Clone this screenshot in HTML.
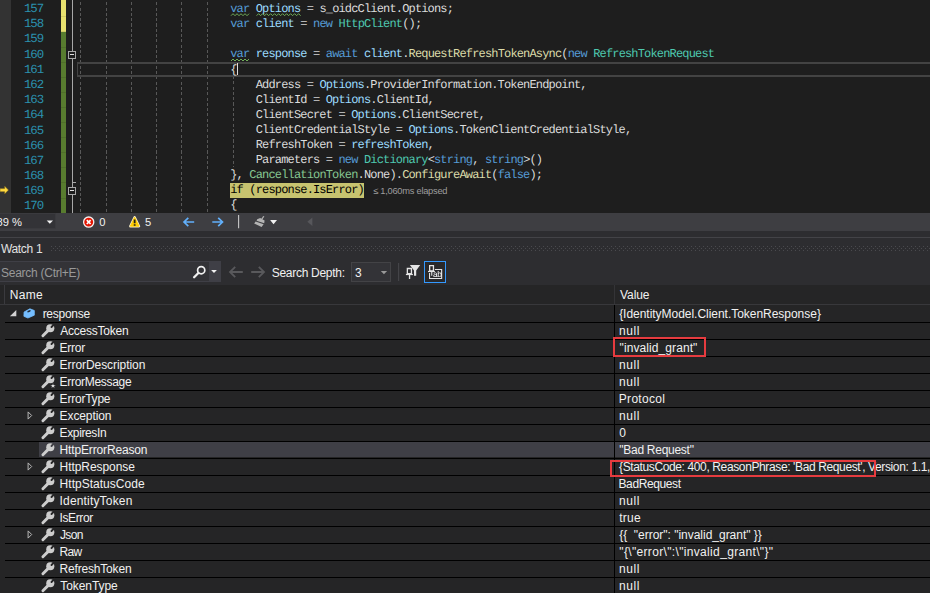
<!DOCTYPE html>
<html lang="en">
<head>
<meta charset="utf-8">
<title>Watch 1</title>
<style>
html,body{margin:0;padding:0;}
body{width:930px;height:593px;overflow:hidden;position:relative;background:#2d2d30;font-family:"Liberation Sans",sans-serif;font-size:12px;color:#f1f1f1;}
div,svg{position:absolute;box-sizing:border-box;}
svg{overflow:visible;}
.ed{left:0;top:0;width:930px;height:213px;background:#1e1e1e;overflow:hidden;}
.gut{left:0;top:0;width:11px;height:213px;background:#333333;}
.ln,.cl{font-family:"Liberation Mono",monospace;font-size:12.0px;line-height:15.1px;height:15.1px;white-space:pre;letter-spacing:-0.836px;text-rendering:geometricPrecision;}
.ln{left:0;width:43.0px;text-align:right;color:#2b91af;font-size:12.4px;letter-spacing:-1.076px;}
.cl{color:#dcdcdc;}
.k{color:#569cd6}.v{color:#9cdcfe}.t{color:#4ec9b0}.m{color:#dcdcaa}.s{color:#86c691}.o{color:#b4b4b4}
.h{color:#000;}
.ig{top:-2.9px;width:1.2px;height:220px;background:repeating-linear-gradient(to bottom,#585858 0,#585858 3.1px,transparent 3.1px,transparent 5.29px);}
.tx{white-space:pre;}
.rl{left:5px;width:925px;height:1px;background:#000;}
</style>
</head>
<body>

<div class="ed">
<div class="gut"></div>
<div style="left:61.3px;top:0;width:4.8px;height:32px;background:#e8e16f"></div>
<div style="left:61.3px;top:32px;width:4.8px;height:181px;background:#587c2f"></div>
<div style="left:61.3px;top:16.3px;width:4.8px;height:1px;background:rgba(0,0,0,0.09)"></div>
<div style="left:61.3px;top:31.4px;width:4.8px;height:1px;background:rgba(0,0,0,0.09)"></div>
<div style="left:61.3px;top:46.5px;width:4.8px;height:1px;background:rgba(0,0,0,0.09)"></div>
<div style="left:61.3px;top:61.6px;width:4.8px;height:1px;background:rgba(0,0,0,0.09)"></div>
<div style="left:61.3px;top:76.7px;width:4.8px;height:1px;background:rgba(0,0,0,0.09)"></div>
<div style="left:61.3px;top:91.8px;width:4.8px;height:1px;background:rgba(0,0,0,0.09)"></div>
<div style="left:61.3px;top:106.9px;width:4.8px;height:1px;background:rgba(0,0,0,0.09)"></div>
<div style="left:61.3px;top:122.0px;width:4.8px;height:1px;background:rgba(0,0,0,0.09)"></div>
<div style="left:61.3px;top:137.1px;width:4.8px;height:1px;background:rgba(0,0,0,0.09)"></div>
<div style="left:61.3px;top:152.2px;width:4.8px;height:1px;background:rgba(0,0,0,0.09)"></div>
<div style="left:61.3px;top:167.3px;width:4.8px;height:1px;background:rgba(0,0,0,0.09)"></div>
<div style="left:61.3px;top:182.4px;width:4.8px;height:1px;background:rgba(0,0,0,0.09)"></div>
<div style="left:61.3px;top:197.5px;width:4.8px;height:1px;background:rgba(0,0,0,0.09)"></div>
<div style="left:61.3px;top:212.6px;width:4.8px;height:1px;background:rgba(0,0,0,0.09)"></div>
<div style="left:72px;top:0;width:1.1px;height:213px;background:#a8a8a8"></div>
<div style="left:73px;top:182px;width:3.3px;height:1px;background:#a8a8a8"></div>
<div style="left:68px;top:51px;width:8.2px;height:8.2px;border:1px solid #a8a8a8;background:#1e1e1e"></div>
<div style="left:70px;top:53.8px;width:4.2px;height:1.2px;background:#e0e0e0"></div>
<div style="left:68px;top:187px;width:8.2px;height:8.2px;border:1px solid #a8a8a8;background:#1e1e1e"></div>
<div style="left:70px;top:189.8px;width:4.2px;height:1.2px;background:#e0e0e0"></div>
<div class="ig" style="left:79.9px"></div>
<div class="ig" style="left:105.9px"></div>
<div class="ig" style="left:130.9px"></div>
<div class="ig" style="left:155.8px"></div>
<div class="ig" style="left:180.8px"></div>
<div class="ig" style="left:206.9px"></div>
<div class="ig" style="left:233.2px;top:76.45px;height:90.3px"></div>
<div style="left:77px;top:62px;width:860px;height:14.8px;border:2px solid #434343;border-left-width:1px;"></div>
<div style="left:230.2px;top:182.7px;width:133.6px;height:15.2px;background:#c7c36f"></div>
<div style="left:237px;top:63px;width:1px;height:12px;background:#dcdcdc"></div>
<div class="ln" style="top:2.14px">157</div>
<div class="cl" style="left:230.26px;top:2.15px"><span class="k">var</span> <span class="v">Options</span><span class="o"> = </span>s_oidcClient.Options;</div>
<div class="ln" style="top:17.31px">158</div>
<div class="cl" style="left:230.26px;top:17.25px"><span class="k">var</span> <span class="v">client</span><span class="o"> = </span><span class="k">new</span> <span class="t">HttpClient</span>();</div>
<div class="ln" style="top:32.48px">159</div>
<div class="ln" style="top:47.65px">160</div>
<div class="cl" style="left:230.26px;top:47.45px"><span class="k">var</span> <span class="v">response</span><span class="o"> = </span><span class="k">await</span> <span class="v">client</span>.<span class="m">RequestRefreshTokenAsync</span>(<span class="k">new</span> <span class="t">RefreshTokenRequest</span></div>
<div class="ln" style="top:62.82px">161</div>
<div class="cl" style="left:230.26px;top:62.55px">{</div>
<div class="ln" style="top:77.99px">162</div>
<div class="cl" style="left:255.72px;top:77.65px">Address<span class="o"> = </span><span class="v">Options</span>.ProviderInformation.TokenEndpoint,</div>
<div class="ln" style="top:93.16px">163</div>
<div class="cl" style="left:255.72px;top:92.75px">ClientId<span class="o"> = </span><span class="v">Options</span>.ClientId,</div>
<div class="ln" style="top:108.33px">164</div>
<div class="cl" style="left:255.72px;top:107.85px">ClientSecret<span class="o"> = </span><span class="v">Options</span>.ClientSecret,</div>
<div class="ln" style="top:123.50px">165</div>
<div class="cl" style="left:255.72px;top:122.95px">ClientCredentialStyle<span class="o"> = </span><span class="v">Options</span>.TokenClientCredentialStyle,</div>
<div class="ln" style="top:138.67px">166</div>
<div class="cl" style="left:255.72px;top:138.05px">RefreshToken<span class="o"> = </span><span class="v">refreshToken</span>,</div>
<div class="ln" style="top:153.84px">167</div>
<div class="cl" style="left:255.72px;top:153.15px">Parameters<span class="o"> = </span><span class="k">new</span> <span class="t">Dictionary</span>&lt;<span class="k">string</span>, <span class="k">string</span>&gt;()</div>
<div class="ln" style="top:169.01px">168</div>
<div class="cl" style="left:230.26px;top:168.25px">}, <span class="s">CancellationToken</span>.None).<span class="m">ConfigureAwait</span>(<span class="k">false</span>);</div>
<div class="ln" style="top:184.18px">169</div>
<div class="cl" style="left:230.26px;top:183.35px"><span class="h">if (response.IsError)</span></div>
<div class="ln" style="top:199.35px">170</div>
<div class="cl" style="left:230.26px;top:198.45px">{</div>
<svg style="left:0;top:0" width="930" height="213"><path d="M231.0 15.7 L233.0 13.7 L235.0 15.7 L237.0 13.7 L239.0 15.7 L241.0 13.7 L243.0 15.7 L245.0 13.7 L247.0 15.7 L249.0 13.7" fill="none" stroke="#74b45c" stroke-width="0.95"/><path d="M256.6 15.7 L258.6 13.7 L260.6 15.7 L262.6 13.7 L264.6 15.7 L266.6 13.7 L268.6 15.7 L270.6 13.7 L272.6 15.7 L274.6 13.7 L276.6 15.7 L278.6 13.7 L280.6 15.7 L282.6 13.7 L284.6 15.7 L286.6 13.7 L288.6 15.7 L290.6 13.7 L292.6 15.7 L294.6 13.7 L296.6 15.7 L298.6 13.7 L300.6 15.7" fill="none" stroke="#74b45c" stroke-width="0.95"/><path d="M231.0 61.0 L233.0 59.0 L235.0 61.0 L237.0 59.0 L239.0 61.0 L241.0 59.0 L243.0 61.0 L245.0 59.0 L247.0 61.0 L249.0 59.0" fill="none" stroke="#74b45c" stroke-width="0.95"/></svg>
<div class="tx" id="elapsed" style="left:373.15px;top:184.20px;font-size:9.3px;line-height:15px;color:#9d9d9d;letter-spacing:-0.259px;">≤ 1,060ms elapsed</div>
<svg style="left:0;top:185px" width="10" height="10" viewBox="0 0 10 10"><path d="M0 3.6 H4.6 V1.1 L8.5 5.1 L4.6 9.1 V6.7 H0 Z" fill="#ffd83d" stroke="#6b5a1c" stroke-width="0.5"/></svg>
</div>
<div style="left:0;top:213px;width:930px;height:18px;background:#3e3e42"></div>
<div style="left:-1px;top:213px;width:56.5px;height:16px;background:#333337;border:1px solid #3a3a3e"></div>
<div class="tx" id="zoom" style="left:-3.55px;top:213.90px;font-size:11.2px;line-height:16px;color:#f1f1f1;letter-spacing:0.000px;">89 %</div>
<div class="tx" id="err0" style="left:99.15px;top:214.00px;font-size:11.2px;line-height:16px;color:#f1f1f1;letter-spacing:0.000px;">0</div>
<div class="tx" id="warn5" style="left:144.95px;top:214.00px;font-size:11.2px;line-height:16px;color:#f1f1f1;letter-spacing:0.000px;">5</div>
<svg style="left:0;top:213px" width="930" height="18" viewBox="0 213 930 18"><path d="M46.7 220.5 H53 L49.85 223.8 Z" fill="#f1f1f1"/><circle cx="88.7" cy="222.1" r="5.1" fill="#e51400" stroke="#f4f0f0" stroke-width="1.3"/><path d="M86.8 220.2 L90.6 224 M90.6 220.2 L86.8 224" stroke="#fff" stroke-width="1.7" fill="none"/><path d="M134.65 217.3 L139 226.2 H130.3 Z" fill="#ffcc00" stroke="#f8f0d0" stroke-width="2.4" stroke-linejoin="round"/><path d="M134.65 217.3 L139 226.2 H130.3 Z" fill="#ffcc00" stroke="#ffcc00" stroke-width="0.9" stroke-linejoin="round"/><path d="M134.65 219.4 V223.2 M134.65 224.2 V225.8" stroke="#1e1e1e" stroke-width="1.8" fill="none"/><path d="M194.2 222 H184 M188.3 217.8 L184 222 L188.3 226.2" stroke="#62b0fb" stroke-width="1.7" fill="none"/><path d="M212.3 222 H222.5 M218.2 217.8 L222.5 222 L218.2 226.2" stroke="#62b0fb" stroke-width="1.7" fill="none"/><path d="M238.6 215 V228.3" stroke="#c8c8c8" stroke-width="1.1"/><g fill="#b4b4b4" stroke="none"><path d="M263.2 215.9 L264.4 216.6 L261.9 220 L260.9 219.4 Z"/><path d="M257.2 219.3 L260.2 218 L264.6 220.6 L264.2 223.2 L256.6 220.8 Z"/><path d="M255.6 221.6 L263.6 224.3 L261.6 227 L254.2 223.6 Z"/></g><path d="M270.1 220.1 H277 L273.55 224.2 Z" fill="#f1f1f1"/><path d="M312.4 217.6 V226 L307.3 221.8 Z" fill="#57575b"/></svg>
<div style="left:0;top:237px;width:930px;height:1px;background:#434347"></div>
<div class="tx" id="watch1" style="left:0.90px;top:241.20px;font-size:12px;line-height:17px;color:#e2e2e2;letter-spacing:-0.317px;">Watch 1</div>
<div style="left:50.5px;top:246px;width:880px;height:5px;background-image:radial-gradient(circle at 0.5px 0.5px,#4a4a4e 0.55px,transparent 0.75px),radial-gradient(circle at 2.5px 2.5px,#4a4a4e 0.55px,transparent 0.75px);background-size:4px 4px;"></div>
<div style="left:-1px;top:261px;width:222px;height:21px;background:#333337;border:1px solid #3f3f46"></div>
<div style="left:209px;top:261px;width:12px;height:21px;background:#3f3f46"></div>
<div class="tx" id="search" style="left:1.00px;top:263.70px;font-size:12px;line-height:18px;color:#999999;letter-spacing:-0.264px;">Search (Ctrl+E)</div>
<div class="tx" id="sdepth" style="left:271.70px;top:264.10px;font-size:12px;line-height:18px;color:#f1f1f1;letter-spacing:-0.279px;">Search Depth:</div>
<div style="left:351px;top:262px;width:40px;height:20px;background:#333337;border:1px solid #434346"></div>
<div class="tx" id="three" style="left:355.05px;top:264.10px;font-size:12px;line-height:18px;color:#f1f1f1;letter-spacing:0.000px;">3</div>
<div style="left:424px;top:261px;width:22px;height:22px;background:#29292b;border:1px solid #3399ff"></div>
<svg style="left:0;top:257px" width="930" height="28" viewBox="0 257 930 28"><circle cx="201.2" cy="270.2" r="3.6" fill="none" stroke="#f1f1f1" stroke-width="1.7"/><path d="M198.4 273 L194.1 277.3" stroke="#f1f1f1" stroke-width="2.3" stroke-linecap="round"/><path d="M211.1 270.1 H216.9 L214 273 Z" fill="#f1f1f1"/><path d="M242.8 272 H230 M235.2 266.8 L230 272 L235.2 277.2" stroke="#59595c" stroke-width="1.8" fill="none"/><path d="M251.2 272 H264 M258.8 266.8 L264 272 L258.8 277.2" stroke="#59595c" stroke-width="1.8" fill="none"/><path d="M380.8 271 H387.1 L383.95 274.2 Z" fill="#999"/><path d="M398.6 263 V281" stroke="#46464a" stroke-width="1.1"/><g fill="none" stroke="#e4e4e4"><path d="M407.35 268.5 H411.45 V273.6 H407.35 Z" stroke-width="1.3"/><path d="M405.9 274.5 H412.9" stroke-width="1.2"/><path d="M409.55 275 V279" stroke-width="1.3"/></g><path d="M409.9 265 H420.2 L416.2 270.6 V275.7 H414 V270.6 Z" fill="#e4e4e4"/><g fill="none" stroke="#e4e4e4"><path d="M429.65 265.65 H433.45 V270.8 H429.65 Z" stroke-width="1.3"/><path d="M428 271.5 H434.9" stroke-width="1.2"/><path d="M431.75 272 V275.7" stroke-width="1.1"/><path d="M429.55 273 V278.45 H441.65 V269.5 H434.9" stroke-width="1.1"/></g></svg>
<div class="tx" style="left:432.7px;top:270.3px;font-size:8.3px;line-height:8px;color:#ffffff;letter-spacing:-0.4px;text-rendering:geometricPrecision;will-change:transform;opacity:0.99">ab</div>
<div style="left:0;top:285px;width:930px;height:308px;background:#252526"></div>
<div style="left:4px;top:285px;width:1px;height:20px;background:#3a3a3e"></div>
<div style="left:0;top:304px;width:930px;height:1px;background:#38383b"></div>
<div style="left:614px;top:285px;width:1px;height:19px;background:#343437"></div>
<div class="tx" id="hname" style="left:9.65px;top:286.50px;font-size:12px;line-height:16px;color:#f1f1f1;letter-spacing:0.333px;">Name</div>
<div class="tx" id="hvalue" style="left:620.10px;top:286.50px;font-size:12px;line-height:16px;color:#f1f1f1;letter-spacing:-0.088px;">Value</div>
<svg style="left:0;top:305px" width="40" height="17" viewBox="0 305 40 17"><path d="M16.3 309.9 V316.3 H9.9 Z" fill="#d4d4d4"/><path d="M24.1 312 L29.9 308.8 L34.3 310.5 L34.3 315.2 L27.9 318 L23.9 316.3 Z" fill="#75beff" stroke="#75beff" stroke-width="0.8" stroke-linejoin="round"/><ellipse cx="29" cy="311.3" rx="1.9" ry="0.85" transform="rotate(-25 29 311.3)" fill="#1f2a38"/></svg>
<div class="tx" id="n0" style="left:42.65px;top:306.20px;font-size:12px;line-height:16px;color:#f1f1f1;letter-spacing:-0.264px;">response</div>
<div class="tx" id="v0" style="left:619.15px;top:306.20px;font-size:12px;line-height:16px;color:#f1f1f1;letter-spacing:-0.030px;">{IdentityModel.Client.TokenResponse}</div>
<div class="rl" style="top:322px"></div>
<svg style="left:40.5px;top:324.2px" width="14" height="14" viewBox="0 0 14 14"><path d="M1.9 11.7 L8 5.6" stroke="#cdcdcd" stroke-width="2.9" stroke-linecap="round" fill="none"/><circle cx="9.3" cy="4.2" r="4.05" fill="#cdcdcd"/><path d="M10.5 3.0 L13.8 -0.3" stroke="#252526" stroke-width="1.9" stroke-linecap="round" fill="none"/></svg>
<div class="tx" id="n1" style="left:60.20px;top:323.00px;font-size:12px;line-height:16px;color:#f1f1f1;letter-spacing:-0.220px;">AccessToken</div>
<div class="tx" id="v1" style="left:619.05px;top:323.00px;font-size:12px;line-height:16px;color:#f1f1f1;letter-spacing:0.550px;">null</div>
<div class="rl" style="top:339px"></div>
<svg style="left:40.5px;top:341.2px" width="14" height="14" viewBox="0 0 14 14"><path d="M1.9 11.7 L8 5.6" stroke="#cdcdcd" stroke-width="2.9" stroke-linecap="round" fill="none"/><circle cx="9.3" cy="4.2" r="4.05" fill="#cdcdcd"/><path d="M10.5 3.0 L13.8 -0.3" stroke="#252526" stroke-width="1.9" stroke-linecap="round" fill="none"/></svg>
<div class="tx" id="n2" style="left:59.60px;top:340.00px;font-size:12px;line-height:16px;color:#f1f1f1;letter-spacing:-0.275px;">Error</div>
<div class="tx" id="v2" style="left:619.60px;top:340.00px;font-size:12px;line-height:16px;color:#f1f1f1;letter-spacing:0.086px;">&quot;invalid_grant&quot;</div>
<div class="rl" style="top:356px"></div>
<svg style="left:40.5px;top:358.2px" width="14" height="14" viewBox="0 0 14 14"><path d="M1.9 11.7 L8 5.6" stroke="#cdcdcd" stroke-width="2.9" stroke-linecap="round" fill="none"/><circle cx="9.3" cy="4.2" r="4.05" fill="#cdcdcd"/><path d="M10.5 3.0 L13.8 -0.3" stroke="#252526" stroke-width="1.9" stroke-linecap="round" fill="none"/></svg>
<div class="tx" id="n3" style="left:59.60px;top:357.00px;font-size:12px;line-height:16px;color:#f1f1f1;letter-spacing:-0.060px;">ErrorDescription</div>
<div class="tx" id="v3" style="left:619.05px;top:357.00px;font-size:12px;line-height:16px;color:#f1f1f1;letter-spacing:0.550px;">null</div>
<div class="rl" style="top:373px"></div>
<svg style="left:40.5px;top:375.2px" width="14" height="14" viewBox="0 0 14 14"><path d="M1.9 11.7 L8 5.6" stroke="#cdcdcd" stroke-width="2.9" stroke-linecap="round" fill="none"/><circle cx="9.3" cy="4.2" r="4.05" fill="#cdcdcd"/><path d="M10.5 3.0 L13.8 -0.3" stroke="#252526" stroke-width="1.9" stroke-linecap="round" fill="none"/><path d="M12.00 8.00 L12.71 9.93 L14.76 10.00 L13.14 11.27 L13.70 13.25 L12.00 12.10 L10.30 13.25 L10.86 11.27 L9.24 10.00 L11.29 9.93 Z" fill="#ececec" stroke="#252526" stroke-width="0.5"/></svg>
<div class="tx" id="n4" style="left:59.60px;top:374.00px;font-size:12px;line-height:16px;color:#f1f1f1;letter-spacing:-0.309px;">ErrorMessage</div>
<div class="tx" id="v4" style="left:619.05px;top:374.00px;font-size:12px;line-height:16px;color:#f1f1f1;letter-spacing:0.550px;">null</div>
<div class="rl" style="top:390px"></div>
<svg style="left:40.5px;top:392.2px" width="14" height="14" viewBox="0 0 14 14"><path d="M1.9 11.7 L8 5.6" stroke="#cdcdcd" stroke-width="2.9" stroke-linecap="round" fill="none"/><circle cx="9.3" cy="4.2" r="4.05" fill="#cdcdcd"/><path d="M10.5 3.0 L13.8 -0.3" stroke="#252526" stroke-width="1.9" stroke-linecap="round" fill="none"/></svg>
<div class="tx" id="n5" style="left:59.60px;top:391.00px;font-size:12px;line-height:16px;color:#f1f1f1;letter-spacing:-0.219px;">ErrorType</div>
<div class="tx" id="v5" style="left:618.80px;top:391.00px;font-size:12px;line-height:16px;color:#f1f1f1;letter-spacing:0.293px;">Protocol</div>
<div class="rl" style="top:407px"></div>
<svg style="left:27px;top:410.7px" width="6" height="9" viewBox="0 0 6 9"><path d="M1.1 0.9 L4.7 4.5 L1.1 8.1 Z" fill="none" stroke="#b8b8b8" stroke-width="1"/></svg>
<svg style="left:40.5px;top:409.2px" width="14" height="14" viewBox="0 0 14 14"><path d="M1.9 11.7 L8 5.6" stroke="#cdcdcd" stroke-width="2.9" stroke-linecap="round" fill="none"/><circle cx="9.3" cy="4.2" r="4.05" fill="#cdcdcd"/><path d="M10.5 3.0 L13.8 -0.3" stroke="#252526" stroke-width="1.9" stroke-linecap="round" fill="none"/></svg>
<div class="tx" id="n6" style="left:59.60px;top:408.00px;font-size:12px;line-height:16px;color:#f1f1f1;letter-spacing:-0.100px;">Exception</div>
<div class="tx" id="v6" style="left:619.05px;top:408.00px;font-size:12px;line-height:16px;color:#f1f1f1;letter-spacing:0.550px;">null</div>
<div class="rl" style="top:424px"></div>
<svg style="left:40.5px;top:426.2px" width="14" height="14" viewBox="0 0 14 14"><path d="M1.9 11.7 L8 5.6" stroke="#cdcdcd" stroke-width="2.9" stroke-linecap="round" fill="none"/><circle cx="9.3" cy="4.2" r="4.05" fill="#cdcdcd"/><path d="M10.5 3.0 L13.8 -0.3" stroke="#252526" stroke-width="1.9" stroke-linecap="round" fill="none"/></svg>
<div class="tx" id="n7" style="left:59.60px;top:425.00px;font-size:12px;line-height:16px;color:#f1f1f1;letter-spacing:-0.381px;">ExpiresIn</div>
<div class="tx" id="v7" style="left:619.30px;top:425.00px;font-size:12px;line-height:16px;color:#f1f1f1;letter-spacing:0.000px;">0</div>
<div style="left:39px;top:441px;width:891px;height:16px;background:#3f3f46"></div>
<div class="rl" style="top:441px"></div>
<svg style="left:40.5px;top:443.2px" width="14" height="14" viewBox="0 0 14 14"><path d="M1.9 11.7 L8 5.6" stroke="#cdcdcd" stroke-width="2.9" stroke-linecap="round" fill="none"/><circle cx="9.3" cy="4.2" r="4.05" fill="#cdcdcd"/><path d="M10.5 3.0 L13.8 -0.3" stroke="#3f3f46" stroke-width="1.9" stroke-linecap="round" fill="none"/></svg>
<div class="tx" id="n8" style="left:59.60px;top:442.00px;font-size:12px;line-height:16px;color:#f1f1f1;letter-spacing:-0.154px;">HttpErrorReason</div>
<div class="tx" id="v8" style="left:619.30px;top:442.00px;font-size:12px;line-height:16px;color:#f1f1f1;letter-spacing:-0.275px;">&quot;Bad Request&quot;</div>
<div class="rl" style="top:458px"></div>
<svg style="left:27px;top:461.7px" width="6" height="9" viewBox="0 0 6 9"><path d="M1.1 0.9 L4.7 4.5 L1.1 8.1 Z" fill="none" stroke="#b8b8b8" stroke-width="1"/></svg>
<svg style="left:40.5px;top:460.2px" width="14" height="14" viewBox="0 0 14 14"><path d="M1.9 11.7 L8 5.6" stroke="#cdcdcd" stroke-width="2.9" stroke-linecap="round" fill="none"/><circle cx="9.3" cy="4.2" r="4.05" fill="#cdcdcd"/><path d="M10.5 3.0 L13.8 -0.3" stroke="#252526" stroke-width="1.9" stroke-linecap="round" fill="none"/></svg>
<div class="tx" id="n9" style="left:59.60px;top:459.00px;font-size:12px;line-height:16px;color:#f1f1f1;letter-spacing:-0.064px;">HttpResponse</div>
<div class="tx" id="v9" style="left:619.05px;top:459.00px;font-size:12px;line-height:16px;color:#f1f1f1;letter-spacing:-0.377px;">{StatusCode: 400, ReasonPhrase: &#x27;Bad Request&#x27;, Version: 1.1,</div>
<div class="rl" style="top:475px"></div>
<svg style="left:40.5px;top:477.2px" width="14" height="14" viewBox="0 0 14 14"><path d="M1.9 11.7 L8 5.6" stroke="#cdcdcd" stroke-width="2.9" stroke-linecap="round" fill="none"/><circle cx="9.3" cy="4.2" r="4.05" fill="#cdcdcd"/><path d="M10.5 3.0 L13.8 -0.3" stroke="#252526" stroke-width="1.9" stroke-linecap="round" fill="none"/></svg>
<div class="tx" id="n10" style="left:59.60px;top:476.00px;font-size:12px;line-height:16px;color:#f1f1f1;letter-spacing:0.019px;">HttpStatusCode</div>
<div class="tx" id="v10" style="left:618.50px;top:476.00px;font-size:12px;line-height:16px;color:#f1f1f1;letter-spacing:-0.389px;">BadRequest</div>
<div class="rl" style="top:492px"></div>
<svg style="left:40.5px;top:494.2px" width="14" height="14" viewBox="0 0 14 14"><path d="M1.9 11.7 L8 5.6" stroke="#cdcdcd" stroke-width="2.9" stroke-linecap="round" fill="none"/><circle cx="9.3" cy="4.2" r="4.05" fill="#cdcdcd"/><path d="M10.5 3.0 L13.8 -0.3" stroke="#252526" stroke-width="1.9" stroke-linecap="round" fill="none"/></svg>
<div class="tx" id="n11" style="left:59.60px;top:493.00px;font-size:12px;line-height:16px;color:#f1f1f1;letter-spacing:0.167px;">IdentityToken</div>
<div class="tx" id="v11" style="left:619.05px;top:493.00px;font-size:12px;line-height:16px;color:#f1f1f1;letter-spacing:0.550px;">null</div>
<div class="rl" style="top:509px"></div>
<svg style="left:40.5px;top:511.2px" width="14" height="14" viewBox="0 0 14 14"><path d="M1.9 11.7 L8 5.6" stroke="#cdcdcd" stroke-width="2.9" stroke-linecap="round" fill="none"/><circle cx="9.3" cy="4.2" r="4.05" fill="#cdcdcd"/><path d="M10.5 3.0 L13.8 -0.3" stroke="#252526" stroke-width="1.9" stroke-linecap="round" fill="none"/></svg>
<div class="tx" id="n12" style="left:59.60px;top:510.00px;font-size:12px;line-height:16px;color:#f1f1f1;letter-spacing:-0.408px;">IsError</div>
<div class="tx" id="v12" style="left:619.15px;top:510.00px;font-size:12px;line-height:16px;color:#f1f1f1;letter-spacing:0.267px;">true</div>
<div class="rl" style="top:526px"></div>
<svg style="left:27px;top:529.7px" width="6" height="9" viewBox="0 0 6 9"><path d="M1.1 0.9 L4.7 4.5 L1.1 8.1 Z" fill="none" stroke="#b8b8b8" stroke-width="1"/></svg>
<svg style="left:40.5px;top:528.2px" width="14" height="14" viewBox="0 0 14 14"><path d="M1.9 11.7 L8 5.6" stroke="#cdcdcd" stroke-width="2.9" stroke-linecap="round" fill="none"/><circle cx="9.3" cy="4.2" r="4.05" fill="#cdcdcd"/><path d="M10.5 3.0 L13.8 -0.3" stroke="#252526" stroke-width="1.9" stroke-linecap="round" fill="none"/></svg>
<div class="tx" id="n13" style="left:59.95px;top:527.00px;font-size:12px;line-height:16px;color:#f1f1f1;letter-spacing:-0.633px;">Json</div>
<div class="tx" id="v13" style="left:619.15px;top:527.00px;font-size:12px;line-height:16px;color:#f1f1f1;letter-spacing:-0.015px;">{{  &quot;error&quot;: &quot;invalid_grant&quot; }}</div>
<div class="rl" style="top:543px"></div>
<svg style="left:40.5px;top:545.2px" width="14" height="14" viewBox="0 0 14 14"><path d="M1.9 11.7 L8 5.6" stroke="#cdcdcd" stroke-width="2.9" stroke-linecap="round" fill="none"/><circle cx="9.3" cy="4.2" r="4.05" fill="#cdcdcd"/><path d="M10.5 3.0 L13.8 -0.3" stroke="#252526" stroke-width="1.9" stroke-linecap="round" fill="none"/></svg>
<div class="tx" id="n14" style="left:59.60px;top:544.00px;font-size:12px;line-height:16px;color:#f1f1f1;letter-spacing:-0.700px;">Raw</div>
<div class="tx" id="v14" style="left:619.30px;top:544.00px;font-size:12px;line-height:16px;color:#f1f1f1;letter-spacing:0.338px;">&quot;{\&quot;error\&quot;:\&quot;invalid_grant\&quot;}&quot;</div>
<div class="rl" style="top:560px"></div>
<svg style="left:40.5px;top:562.2px" width="14" height="14" viewBox="0 0 14 14"><path d="M1.9 11.7 L8 5.6" stroke="#cdcdcd" stroke-width="2.9" stroke-linecap="round" fill="none"/><circle cx="9.3" cy="4.2" r="4.05" fill="#cdcdcd"/><path d="M10.5 3.0 L13.8 -0.3" stroke="#252526" stroke-width="1.9" stroke-linecap="round" fill="none"/></svg>
<div class="tx" id="n15" style="left:59.60px;top:561.00px;font-size:12px;line-height:16px;color:#f1f1f1;letter-spacing:-0.186px;">RefreshToken</div>
<div class="tx" id="v15" style="left:619.05px;top:561.00px;font-size:12px;line-height:16px;color:#f1f1f1;letter-spacing:0.550px;">null</div>
<div class="rl" style="top:577px"></div>
<svg style="left:40.5px;top:579.2px" width="14" height="14" viewBox="0 0 14 14"><path d="M1.9 11.7 L8 5.6" stroke="#cdcdcd" stroke-width="2.9" stroke-linecap="round" fill="none"/><circle cx="9.3" cy="4.2" r="4.05" fill="#cdcdcd"/><path d="M10.5 3.0 L13.8 -0.3" stroke="#252526" stroke-width="1.9" stroke-linecap="round" fill="none"/></svg>
<div class="tx" id="n16" style="left:60.35px;top:578.00px;font-size:12px;line-height:16px;color:#f1f1f1;letter-spacing:-0.081px;">TokenType</div>
<div class="tx" id="v16" style="left:619.05px;top:578.00px;font-size:12px;line-height:16px;color:#f1f1f1;letter-spacing:0.550px;">null</div>
<div style="left:614px;top:305px;width:1px;height:288px;background:#000"></div>
<div style="left:613px;top:337px;width:93px;height:20px;border:2px solid #e63b3f"></div>
<div style="left:610px;top:460px;width:266px;height:17px;border:2px solid #e63b3f"></div>
</body>
</html>
